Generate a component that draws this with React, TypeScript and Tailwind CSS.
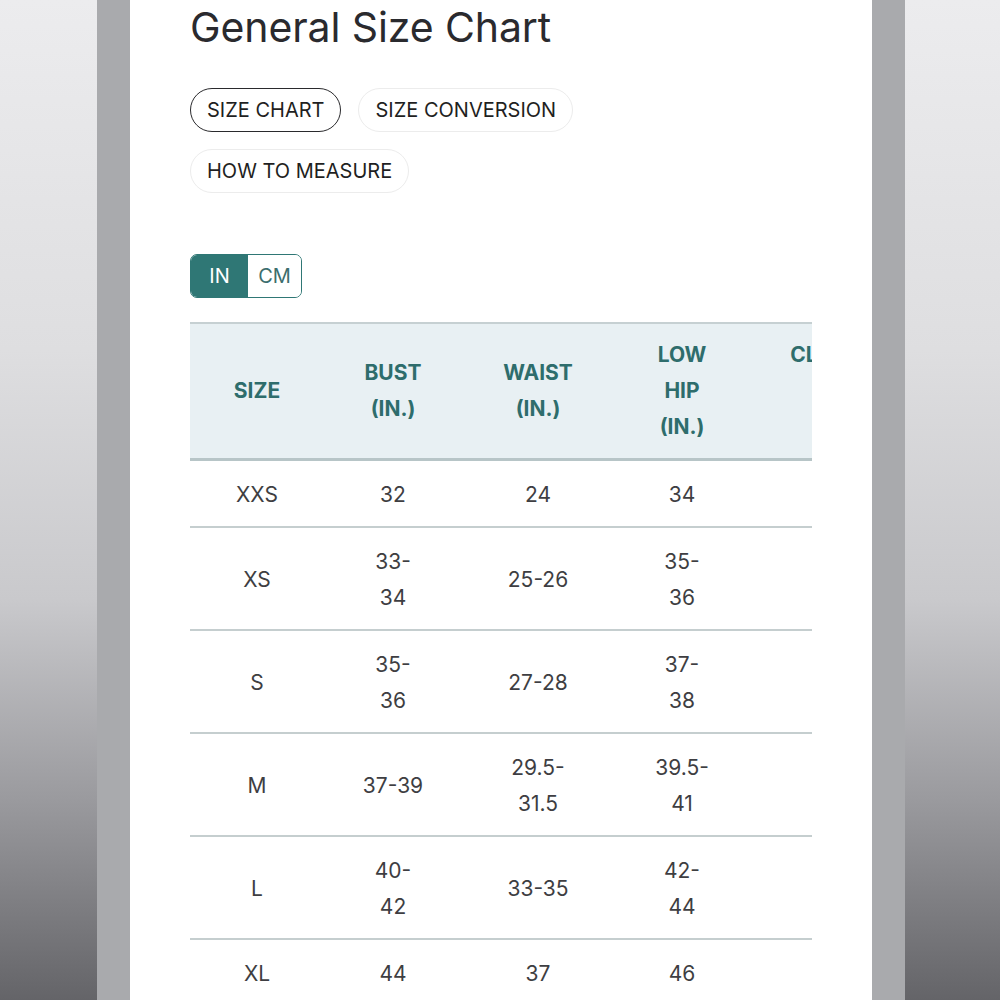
import React from 'react';

const rows: { size: string; bust: string[]; waist: string[]; hip: string[] }[] = [
  { size: 'XXS', bust: ['32'], waist: ['24'], hip: ['34'] },
  { size: 'XS', bust: ['33-', '34'], waist: ['25-26'], hip: ['35-', '36'] },
  { size: 'S', bust: ['35-', '36'], waist: ['27-28'], hip: ['37-', '38'] },
  { size: 'M', bust: ['37-39'], waist: ['29.5-', '31.5'], hip: ['39.5-', '41'] },
  { size: 'L', bust: ['40-', '42'], waist: ['33-35'], hip: ['42-', '44'] },
  { size: 'XL', bust: ['44'], waist: ['37'], hip: ['46'] },
];

function Lines({ lines }: { lines: string[] }) {
  return (
    <>
      {lines.map((l, i) => (
        <div key={i}>{l}</div>
      ))}
    </>
  );
}

function Pill({ label, active }: { label: string; active?: boolean }) {
  return (
    <div
      className={`h-[44px] px-[16px] flex items-center rounded-full text-[20px] text-[#1f1f22] ${
        active ? 'border-[1.5px] border-[#2a2a2d]' : 'border-[1.5px] border-[#ececec]'
      }`}
    >
      {label}
    </div>
  );
}

function SideStrip() {
  return (
    <div className="h-full bg-[linear-gradient(to_bottom,#ececee_0%,#dedee0_35%,#c9c9cc_60%,#9a9a9e_80%,#646468_100%)]" />
  );
}

export default function App() {
  return (
    <div className="flex h-[1000px] w-[1000px] overflow-hidden font-['Inter',sans-serif]">
      <div className="w-[97px] shrink-0">
        <SideStrip />
      </div>
      <div className="w-[33px] shrink-0 bg-[#a9aaad]" />

      <main className="w-[742px] shrink-0 bg-white pl-[60px] overflow-hidden">
        <h1 className="text-[41px] leading-[48px] text-[#2a2a2e] tracking-[-0.1px] mt-[3px]">
          General Size Chart
        </h1>

        <div className="mt-[37px] flex flex-wrap gap-[17px] max-w-[420px]">
          <Pill label="SIZE CHART" active />
          <Pill label="SIZE CONVERSION" />
          <Pill label="HOW TO MEASURE" />
        </div>

        <div className="mt-[61px] flex w-[112px] h-[44px] rounded-[7px] border-[1.5px] border-[#2f7775] overflow-hidden text-[20px]">
          <div className="w-[57px] bg-[#2f7775] text-white flex items-center justify-center">IN</div>
          <div className="flex-1 bg-white text-[#3c6e6d] flex items-center justify-center">CM</div>
        </div>

        <div className="mt-[24px] w-[622px] overflow-hidden">
          <table className="table-fixed border-collapse w-[710px] text-center">
            <colgroup>
              <col className="w-[134px]" />
              <col className="w-[138px]" />
              <col className="w-[152px]" />
              <col className="w-[136px]" />
              <col className="w-[150px]" />
            </colgroup>
            <thead>
              <tr className="bg-[#e8f0f3] border-t-2 border-t-[#c6d0d2] border-b-[3px] border-b-[#b7c5c7] text-[#2e6d6c] font-bold text-[21px] leading-[36px]">
                <th className="py-[13px] align-middle font-bold">SIZE</th>
                <th className="py-[13px] align-middle font-bold">
                  <Lines lines={['BUST', '(IN.)']} />
                </th>
                <th className="py-[13px] align-middle font-bold">
                  <Lines lines={['WAIST', '(IN.)']} />
                </th>
                <th className="py-[13px] align-middle font-bold">
                  <Lines lines={['LOW', 'HIP', '(IN.)']} />
                </th>
                <th className="py-[13px] align-top font-bold">CLOSE</th>
              </tr>
            </thead>
            <tbody className="text-[21px] leading-[36.5px] text-[#3e3e42]">
              {rows.map((r) => (
                <tr key={r.size} className="border-b-2 border-b-[#c5cecf]">
                  <td className="pt-[16px] pb-[12px] align-middle">{r.size}</td>
                  <td className="pt-[16px] pb-[12px] align-middle">
                    <Lines lines={r.bust} />
                  </td>
                  <td className="pt-[16px] pb-[12px] align-middle">
                    <Lines lines={r.waist} />
                  </td>
                  <td className="pt-[16px] pb-[12px] align-middle">
                    <Lines lines={r.hip} />
                  </td>
                  <td className="pt-[16px] pb-[12px]" />
                </tr>
              ))}
            </tbody>
          </table>
        </div>
      </main>

      <div className="w-[33px] shrink-0 bg-[#a9aaad]" />
      <div className="flex-1">
        <SideStrip />
      </div>
    </div>
  );
}
